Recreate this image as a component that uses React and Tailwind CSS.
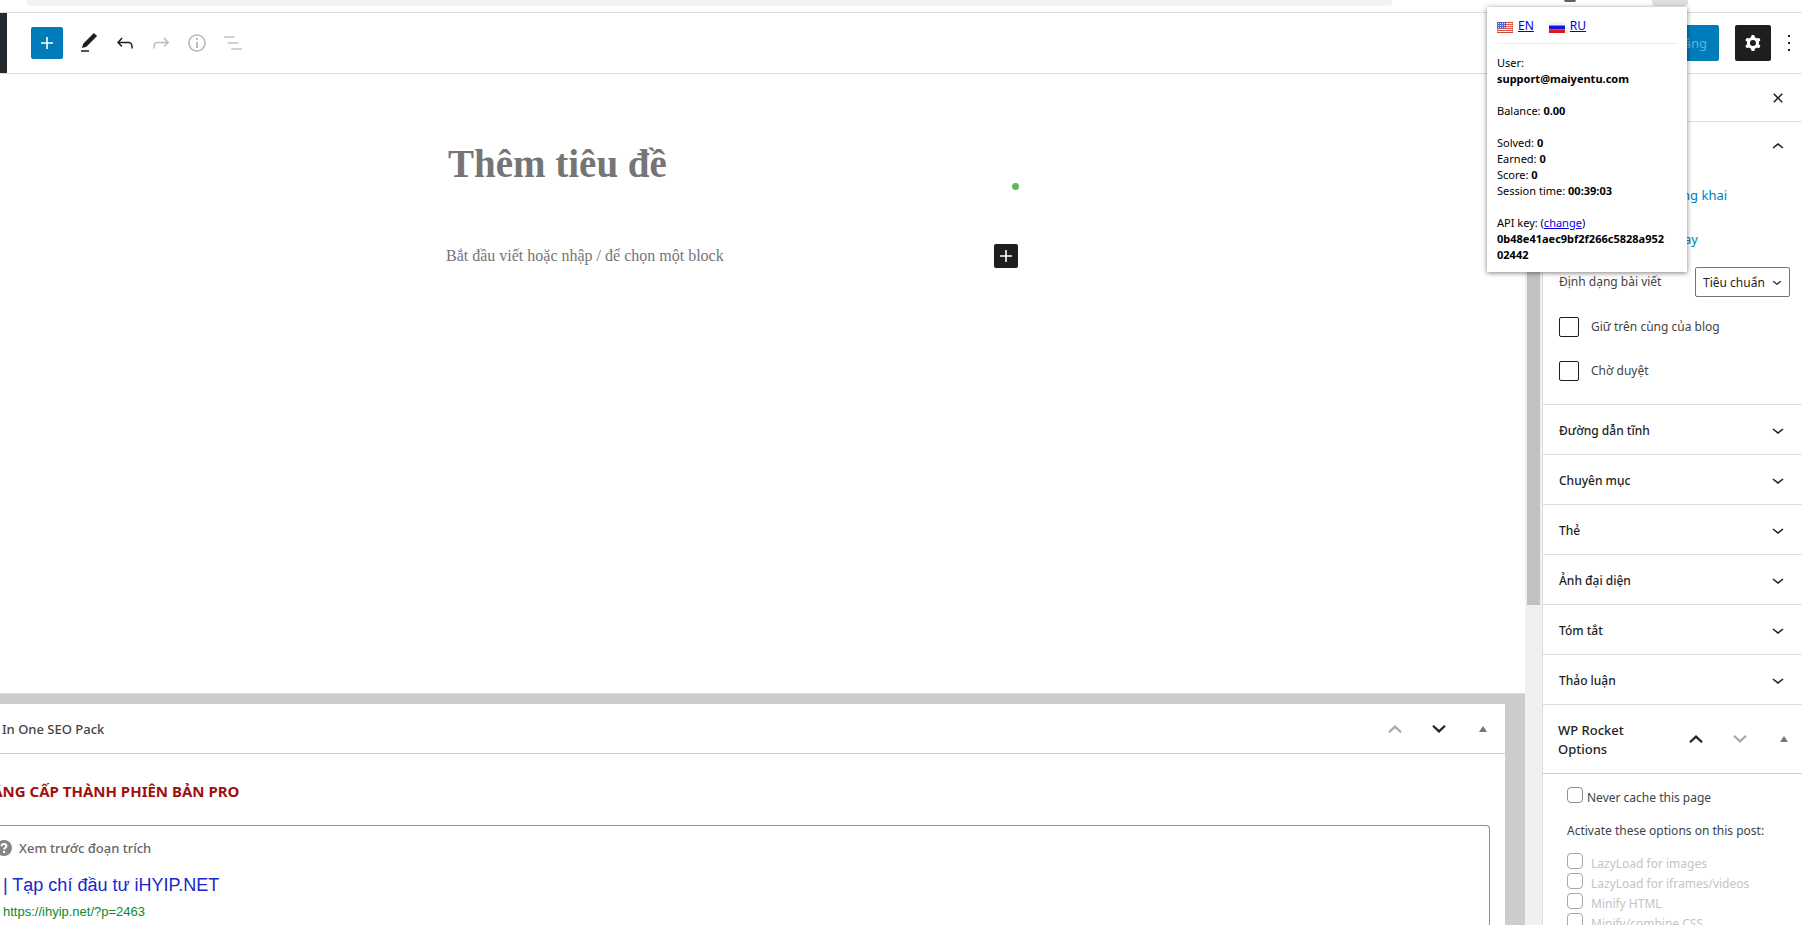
import React from "react";

const PATHS = {
  plus: "M18 11.2h-5.2V6h-1.6v5.2H6v1.6h5.2V18h1.6v-5.2H18z",
  edit: "M20.1 5.1L16.9 2 6.2 12.7l-1.3 4.4 4.5-1.3L20.1 5.1zM4 20.8h8v-1.5H4v1.5z",
  undo: "M18.3 11.7c-.6-.6-1.4-.9-2.3-.9H6.7l2.9-3.3-1.1-1-4.5 5L8.5 16l1-1-2.7-2.7H16c.5 0 .9.2 1.3.5 1 1 1 3.4 1 4.5v.3h1.5v-.2c0-1.5 0-4.3-1.5-5.7z",
  redo: "M15.6 6.5l-1.1 1 2.9 3.3H8c-.9 0-1.7.3-2.3.9-1.4 1.5-1.4 4.2-1.4 5.6v.2h1.5v-.3c0-1.1 0-3.5 1-4.5.3-.3.7-.5 1.3-.5h9.2L14.5 15l1.1 1.1 4.6-4.6-4.6-5z",
  info: "M12 3.2c-4.8 0-8.8 3.9-8.8 8.8 0 4.8 3.9 8.8 8.8 8.8 4.8 0 8.8-3.9 8.8-8.8 0-4.8-4-8.8-8.8-8.8zm0 16c-4 0-7.2-3.3-7.2-7.2C4.8 8 8 4.8 12 4.8s7.2 3.3 7.2 7.2c0 4-3.2 7.2-7.2 7.2zM11 17h2v-6h-2v6zm0-8h2V7h-2v2z",
  list: "M13.8 5.2H3v1.5h10.8V5.2zm-3.6 12v1.5H21v-1.5H10.2zm7.2-6H6.6v1.5h10.8v-1.5z",
  cog: "M10.289 4.836A1 1 0 0111.275 4h1.306a1 1 0 01.987.836l.244 1.466c.787.26 1.503.679 2.108 1.218l1.393-.522a1 1 0 011.216.437l.653 1.13a1 1 0 01-.23 1.273l-1.148.944a6.025 6.025 0 010 2.435l1.149.946a1 1 0 01.23 1.272l-.653 1.13a1 1 0 01-1.216.437l-1.394-.522c-.605.54-1.32.958-2.108 1.218l-.244 1.466a1 1 0 01-.987.836h-1.306a1 1 0 01-.986-.836l-.244-1.466a5.995 5.995 0 01-2.108-1.218l-1.394.522a1 1 0 01-1.217-.436l-.653-1.131a1 1 0 01.23-1.272l1.149-.946a6.026 6.026 0 010-2.435l-1.148-.944a1 1 0 01-.23-1.272l.653-1.131a1 1 0 011.217-.437l1.393.522a5.994 5.994 0 012.108-1.218l.244-1.466zM14.929 12a3 3 0 11-6 0 3 3 0 016 0z",
  more: "M13 20h-2v-2h2v2zm0-7h-2v-2h2v2zm0-7h-2V4h2v2z",
  close: "M12 13.06l3.712 3.713 1.061-1.06L13.061 12l3.712-3.712-1.06-1.06L12 10.938 8.288 7.227l-1.061 1.06L10.939 12l-3.712 3.712 1.06 1.061L12 13.061z",
  up: "M6.5 12.4L12 8l5.5 4.4-.9 1.2L12 10l-4.5 3.6-1-1.2z",
  down: "M17.5 11.6L12 16l-5.5-4.4.9-1.2L12 14l4.5-3.6 1 1.2z",
};

function Icon({ name, className = "size-6" }) {
  return (
    <svg viewBox="0 0 24 24" className={`shrink-0 ${className}`} fill="currentColor" fillRule="evenodd" aria-hidden="true">
      <path d={PATHS[name]} />
    </svg>
  );
}

function ToolButton({ name, label, className = "text-[#1e1e1e]" }) {
  return (
    <button type="button" aria-label={label} className={`flex size-9 shrink-0 items-center justify-center ${className}`}>
      <Icon name={name} />
    </button>
  );
}

function OrderButtons({ upClass, downClass }) {
  return (
    <div className="flex shrink-0 items-center">
      <button type="button" aria-label="Move up" className={`flex h-9 w-11 items-center justify-center ${upClass}`}>
        <svg viewBox="0 0 14 8" className="h-2 w-3.5" fill="none" stroke="currentColor" strokeWidth="2.2" aria-hidden="true">
          <path d="M1 7.2 7 1.6l6 5.6" />
        </svg>
      </button>
      <button type="button" aria-label="Move down" className={`flex h-9 w-11 items-center justify-center ${downClass}`}>
        <svg viewBox="0 0 14 8" className="h-2 w-3.5" fill="none" stroke="currentColor" strokeWidth="2.2" aria-hidden="true">
          <path d="M1 .8 7 6.4l6-5.6" />
        </svg>
      </button>
      <button type="button" aria-label="Toggle panel" className="flex h-9 w-11 items-center justify-center text-[#72777c]">
        <svg viewBox="0 0 8 6" className="h-1.5 w-2" fill="currentColor" aria-hidden="true">
          <path d="M4 0 8 6H0z" />
        </svg>
      </button>
    </div>
  );
}

function BrowserStrip() {
  return (
    <div className="flex h-3 shrink-0 items-start pl-[27px]">
      <div className="h-1.5 flex-1 rounded-b bg-[#f1f3f4]" />
      <div className="flex w-[410px] items-start">
        <div className="ml-[172px] h-0.5 w-3 rounded-b bg-[#5f6368]" />
        <div className="ml-[76px] h-1.5 w-9 rounded-b bg-[#dfdfdf]" />
      </div>
    </div>
  );
}

function Header() {
  return (
    <header className="flex h-[62px] shrink-0 items-center border-y border-[#dddddd]">
      <div className="w-[7px] self-stretch bg-[#23282d]" />
      <button type="button" aria-label="Add block" className="ml-6 mr-2 flex size-8 items-center justify-center rounded-xs bg-[#007cba] text-white">
        <Icon name="plus" />
      </button>
      <ToolButton name="edit" label="Tools" />
      <ToolButton name="undo" label="Undo" />
      <ToolButton name="redo" label="Redo" className="text-[#bbbbbb]" />
      <ToolButton name="info" label="Details" className="text-[#bbbbbb]" />
      <ToolButton name="list" label="List view" className="text-[#c4c4c4]" />
      <div className="ml-auto flex items-center">
        <button type="button" className="mr-4 h-9 rounded-xs bg-[#007cba] px-3 pt-0.5 text-[13px] text-[#66b0d6]">Đăng</button>
        <ToolButton name="cog" label="Settings" className="rounded-xs bg-[#1e1e1e] text-white" />
        <div className="-mr-[5px]">
          <ToolButton name="more" label="Options" />
        </div>
      </div>
    </header>
  );
}

function Canvas() {
  return (
    <section className="h-[619px] shrink-0 overflow-hidden pr-[61px] font-['Liberation_Serif',serif]">
      <div className="mx-auto w-[572px] pt-[66px]">
        <input
          aria-label="Thêm tiêu đề"
          placeholder="Thêm tiêu đề"
          className="block h-12 w-full pl-0.5 text-[39px] leading-[48px] font-bold outline-none placeholder:text-[#757575]"
        />
        <div className="-mt-[5px] mr-[-1px] flex justify-end">
          <span className="size-[7px] rounded-full bg-[#5cb85c]" />
        </div>
        <div className="mt-[54px] flex h-6 items-center">
          <input
            aria-label="Block"
            placeholder="Bắt đầu viết hoặc nhập / để chọn một block"
            className="min-w-0 flex-1 text-base outline-none placeholder:text-[#757575]"
          />
          <button type="button" aria-label="Add block" className="flex size-6 items-center justify-center rounded-xs bg-[#1e1e1e] text-white">
            <Icon name="plus" />
          </button>
        </div>
      </div>
    </section>
  );
}

function SeoBox() {
  return (
    <section className="flex min-h-0 flex-1 flex-col border-t border-[#dddddd] bg-[#cccccc] pt-2.5 pr-5">
      <div className="flex-1 bg-white">
        <div className="flex h-[50px] items-center justify-between border-b border-[#cccccc]">
          <h2 className="pt-0.5 pl-0.5 text-[13px] font-medium text-[#444444]">In One SEO Pack</h2>
          <OrderButtons upClass="text-[#a7aaad]" downClass="text-[#1d2327]" />
        </div>
        <div className="flex h-[71px] items-center overflow-hidden pt-1">
          <a href="#pro" className="-ml-5 text-[15px] font-bold whitespace-nowrap text-[#a00f0f]">NÂNG CẤP THÀNH PHIÊN BẢN PRO</a>
        </div>
        <div className="mr-[15px] h-[110px] rounded-tr border-t border-r border-[#8c8f94] pt-3">
          <div className="flex h-5 items-center gap-[7px]">
            <svg viewBox="0 0 16 16" className="-ml-1 size-4" aria-hidden="true">
              <circle cx="8" cy="8" r="8" fill="#82878c" />
              <path d="M5.6 6.300C5.600 4.700 6.700 4 8 4s2.400.7 2.400 2c0 1.700-2.300 1.700-2.300 3.400" fill="none" stroke="#fff" strokeWidth="2" />
              <circle cx="8.100" cy="11.900" r="1.200" fill="#fff" />
            </svg>
            <span className="pt-0.5 text-[13px] font-medium text-[#666666]">Xem trước đoạn trích</span>
          </div>
          <div className="pl-[3px] font-['Liberation_Sans',sans-serif]">
            <a href="#preview" className="mt-[15px] block text-lg leading-6 text-[#1a26cc]">| Tạp chí đầu tư iHYIP.NET</a>
            <p className="mt-[5px] text-[13px] leading-5 text-[#0a8a2e]">https://ihyip.net/?p=2463</p>
          </div>
        </div>
      </div>
    </section>
  );
}

const PANELS = ["Đường dẫn tĩnh", "Chuyên mục", "Thẻ", "Ảnh đại diện", "Tóm tắt", "Thảo luận"];
const OPTIONS = ["LazyLoad for images", "LazyLoad for iframes/videos", "Minify HTML", "Minify/combine CSS"];

function Sidebar() {
  return (
    <aside className="w-[260px] shrink-0 overflow-hidden border-l border-[#dddddd] text-xs text-[#1e1e1e]">
      <div className="flex h-12 items-center justify-end border-b border-[#dddddd] pr-3">
        <button type="button" aria-label="Close settings"><Icon name="close" /></button>
      </div>
      <section className="h-[282px] pr-3 pl-4">
        <div className="flex h-[50px] items-center justify-end">
          <button type="button" aria-label="Toggle panel"><Icon name="up" /></button>
        </div>
        <div className="flex h-12 items-center pl-[107px]">
          <a href="#visibility" className="text-[13px] text-[#007cba]">Công khai</a>
        </div>
        <div className="flex h-10 items-center pl-[107px]">
          <a href="#schedule" className="text-[13px] text-[#007cba]">Ngay</a>
        </div>
        <div className="mt-[7px] flex h-[30px] items-center justify-between">
          <label htmlFor="format" className="text-[#444444]">Định dạng bài viết</label>
          <div className="relative">
            <select id="format" className="h-[30px] w-[95px] appearance-none rounded-xs border border-[#757575] bg-white pt-0.5 pl-[7px] text-xs text-[#1e1e1e]">
              <option>Tiêu chuẩn</option>
            </select>
            <span className="pointer-events-none absolute inset-y-0 right-1 flex items-center">
              <Icon name="down" className="size-[18px]" />
            </span>
          </div>
        </div>
        <label className="mt-5 flex h-5 items-center gap-3 text-[#444444]">
          <input type="checkbox" className="size-5 appearance-none rounded-xs border border-[#1e1e1e] bg-white" />
          Giữ trên cùng của blog
        </label>
        <label className="mt-6 flex h-5 items-center gap-3 text-[#444444]">
          <input type="checkbox" className="size-5 appearance-none rounded-xs border border-[#1e1e1e] bg-white" />
          Chờ duyệt
        </label>
      </section>
      {PANELS.map((title) => (
        <button key={title} type="button" className="flex h-[50px] w-full items-center justify-between border-t border-[#dddddd] pr-3 pl-4 text-left font-medium">
          <span className="pt-0.5">{title}</span>
          <Icon name="down" />
        </button>
      ))}
      <section className="border-t border-[#dddddd]">
        <div className="-mr-1 flex h-[69px] items-center justify-between border-b border-[#cccccc] pl-[15px]">
          <h2 className="w-20 pt-0.5 text-[13px] leading-[19px] font-medium">WP Rocket Options</h2>
          <OrderButtons upClass="text-[#1d2327]" downClass="text-[#a7aaad]" />
        </div>
        <div className="pt-[13px] pl-6 text-[#3c434a]">
          <label className="flex h-5 items-start gap-1 leading-[22px]">
            <input type="checkbox" className="size-4 appearance-none rounded border border-[#8c8f94] bg-white" />
            Never cache this page
          </label>
          <p className="mt-3.5 mb-3 leading-5 whitespace-nowrap">Activate these options on this post:</p>
          {OPTIONS.map((name) => (
            <label key={name} className="flex h-5 items-start gap-2 leading-[22px] whitespace-nowrap text-[#c3c4c7]">
              <input type="checkbox" disabled className="size-4 appearance-none rounded border border-[#a4a6aa] bg-white" />
              {name}
            </label>
          ))}
        </div>
      </section>
    </aside>
  );
}

function FlagUS() {
  return (
    <svg viewBox="0 0 16 11" className="mt-0.5 h-[11px] w-4" aria-hidden="true">
      <rect width="16" height="11" fill="#fbeeee" />
      <path d="M0 .5h16M0 2.500h16M0 4.500h16M0 6.500h16M0 8.500h16M0 10.500h16" stroke="#e8503f" />
      <rect width="9" height="6.500" fill="#3c6fd0" />
      <path d="M1 1.500h7M1 3.500h7M1 5.500h7" stroke="#dbe6fa" strokeDasharray="1 1" />
      <rect x=".5" y=".5" width="15" height="10" fill="none" stroke="#a04030" strokeOpacity=".4" />
    </svg>
  );
}

function FlagRU() {
  return (
    <svg viewBox="0 0 16 11" className="mt-0.5 h-[11px] w-4" aria-hidden="true">
      <rect width="16" height="4" fill="#f0f0f0" />
      <rect y="3.500" width="16" height="4" fill="#1414e6" />
      <rect y="7.500" width="16" height="3.500" fill="#e01818" />
    </svg>
  );
}

function AccountPopup() {
  return (
    <div className="absolute top-[7px] right-[115px] w-[200px] bg-white p-2.5 pt-2 pb-[9px] text-[11px] leading-4 text-black shadow-[0_1px_5px_rgba(0,0,0,0.5)]">
      <div className="flex h-[29px] items-start border-b border-[#eeeeee] pt-[3px]">
        <a href="#en" className="flex items-center gap-[5px] text-xs leading-4 text-[#0000ee] underline"><FlagUS />EN</a>
        <a href="#ru" className="ml-[15px] flex items-center gap-[5px] text-xs leading-4 text-[#0000ee] underline"><FlagRU />RU</a>
      </div>
      <p className="mt-[11px]">User:<br /><b>support@maiyentu.com</b></p>
      <p className="mt-4">Balance: <b>0.00</b></p>
      <p className="mt-4">Solved: <b>0</b></p>
      <p>Earned: <b>0</b></p>
      <p>Score: <b>0</b></p>
      <p>Session time: <b>00:39:03</b></p>
      <p className="mt-4">API key: (<a href="#change" className="text-[#0000ee] underline">change</a>)</p>
      <p><b>0b48e41aec9bf2f266c5828a952<br />02442</b></p>
    </div>
  );
}

export default function App() {
  return (
    <div className="relative flex h-screen flex-col overflow-hidden bg-white font-['Noto_Sans',sans-serif]">
      <BrowserStrip />
      <Header />
      <div className="flex min-h-0 flex-1">
        <main className="flex min-w-0 flex-1 flex-col overflow-hidden">
          <Canvas />
          <SeoBox />
        </main>
        <div className="w-[17px] shrink-0 bg-[#f0f0f0] px-0.5">
          <div className="h-[531px] w-[13px] bg-[#c1c1c1]" />
        </div>
        <Sidebar />
      </div>
      <AccountPopup />
    </div>
  );
}
